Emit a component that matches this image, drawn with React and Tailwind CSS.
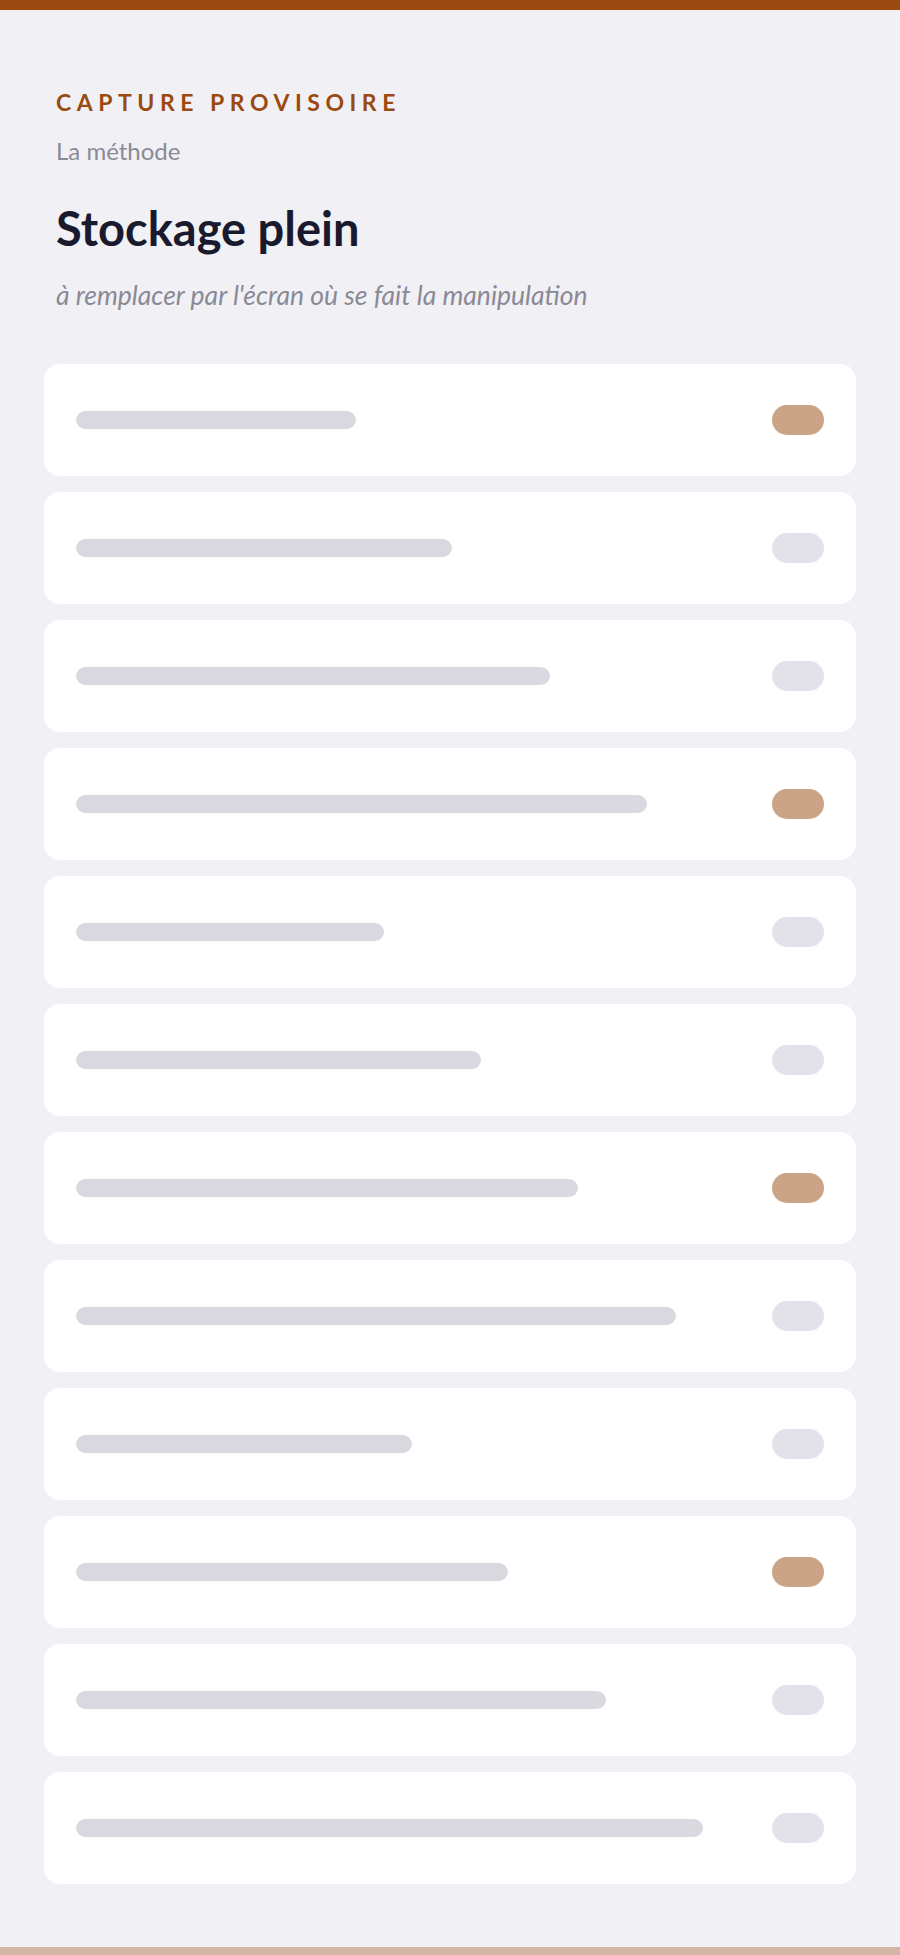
const rows = [
  { w: 280, on: true },
  { w: 376, on: false },
  { w: 474, on: false },
  { w: 571, on: true },
  { w: 308, on: false },
  { w: 405, on: false },
  { w: 502, on: true },
  { w: 600, on: false },
  { w: 336, on: false },
  { w: 432, on: true },
  { w: 530, on: false },
  { w: 627, on: false },
];

function Row({ w, on }) {
  return (
    <div className="h-[112px] rounded-2xl bg-white px-8 flex items-center justify-between">
      <div className="h-[18px] rounded-full bg-[#d9d9df]" style={{ width: w }} />
      <div className={on ? 'w-[52px] h-[30px] rounded-full bg-[#cba386]' : 'w-[52px] h-[30px] rounded-full bg-[#e2e2e8]'} />
    </div>
  );
}

export default function App() {
  return (
    <div className="min-h-[1955px] flex flex-col bg-[#f1f1f5] font-['Lato','Open_Sans',sans-serif]">
      <div className="h-[10px] bg-[#9a4a10]" />

      <main className="flex-1 px-11 pt-[78px]">
        <header className="px-3">
          <p className="text-[23px] leading-[28px] font-bold tracking-[0.24em] text-[#9a4a10]">CAPTURE PROVISOIRE</p>
          <p className="mt-[21px] text-[24px] leading-[28px] text-[#8a8a96]">La méthode</p>
          <h1 className="mt-[37px] text-[47px] leading-[52px] font-bold text-[#1a1a2e]">Stockage plein</h1>
          <p className="mt-[27px] text-[26.5px] leading-[28px] italic text-[#8a8a96]">à remplacer par l'écran où se fait la manipulation</p>
        </header>

        <div className="mt-[55px] flex flex-col gap-4">
          {rows.map((r, i) => (
            <Row key={i} {...r} />
          ))}
        </div>
      </main>

      <div className="h-2 bg-[#d4b5a5]" />
    </div>
  );
}
